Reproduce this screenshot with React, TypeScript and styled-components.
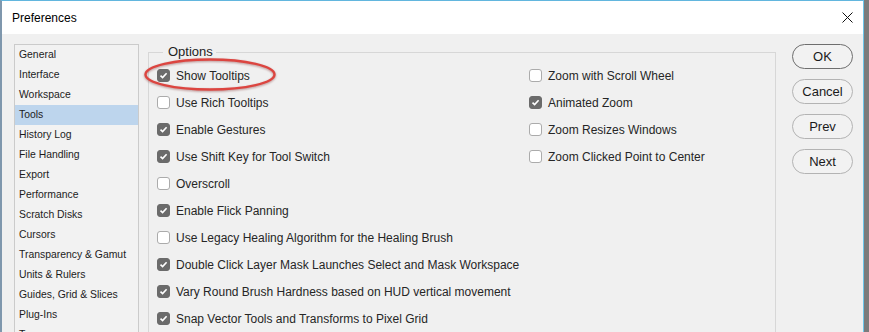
import * as React from "react";
import styled, { createGlobalStyle } from "styled-components";

const GlobalStyle = createGlobalStyle`
    html, body {
        margin: 0;
        padding: 0;
        height: 100%;
        overflow: hidden;
        background: #7b7b7b;
    }
    body {
        font-family: "Liberation Sans", Arial, sans-serif;
    }
`;

const Window = styled.div`
    width: 864px;
    height: 332px;
    box-sizing: border-box;
    border-left: 2px solid #7f97ad;
    border-top: 1px solid #62b6de;
    border-right: 1px solid #6cc6ea;
    background: #f0f0f0;
    display: flex;
    flex-direction: column;
    overflow: hidden;
`;

const TitleBar = styled.div`
    height: 33px;
    flex-shrink: 0;
    background: #ffffff;
    display: flex;
    align-items: center;
    justify-content: space-between;
    padding: 0 10px 0 10px;
    font-size: 12px;
    color: #000;
`;

const CloseIcon = styled.svg`
    width: 11px;
    height: 11px;
`;

const Body = styled.div`
    flex: 1;
    display: flex;
    align-items: flex-start;
    padding: 10px 0 0 12px;
    overflow: hidden;
`;

const Sidebar = styled.ul`
    list-style: none;
    margin: 0;
    padding: 0;
    width: 125px;
    height: 360px;
    box-sizing: border-box;
    flex-shrink: 0;
    border: 1px solid #cbcbcb;
    background: #f2f2f2;
`;

const SidebarItem = styled.li<{ $selected?: boolean }>`
    height: 20px;
    line-height: 20px;
    padding-left: 4px;
    font-size: 10.4px;
    color: #1c1c1c;
    white-space: nowrap;
    background: ${(p) => (p.$selected ? "#bdd5ed" : "transparent")};
`;

const Options = styled.fieldset`
    margin: 0 0 0 9px;
    padding: 2px 8px 0 8px;
    width: 628px;
    height: 340px;
    box-sizing: border-box;
    flex-shrink: 0;
    border: 1px solid #d7d7d7;
    display: flex;
    align-items: flex-start;
`;

const Legend = styled.legend`
    margin-left: 6px;
    padding: 0 3px 0 5px;
    font-size: 13px;
    line-height: 16px;
    color: #1e1e1e;
`;

const Column = styled.div<{ $width?: number }>`
    display: flex;
    flex-direction: column;
    width: ${(p) => (p.$width ? `${p.$width}px` : "auto")};
    flex-shrink: 0;
`;

const Row = styled.label`
    position: relative;
    display: flex;
    align-items: center;
    gap: 6px;
    height: 27px;
    font-size: 12px;
    color: #262626;
    white-space: nowrap;
`;

const Box = styled.span<{ $checked?: boolean }>`
    width: 13px;
    height: 13px;
    box-sizing: border-box;
    border-radius: 3px;
    flex-shrink: 0;
    display: flex;
    align-items: center;
    justify-content: center;
    background: ${(p) => (p.$checked ? "#6b6b6b" : "#ffffff")};
    border: 1px solid ${(p) => (p.$checked ? "#6b6b6b" : "#ababab")};
`;

const Highlight = styled.svg`
    position: absolute;
    left: -13px;
    top: -4px;
    width: 132px;
    height: 33px;
    overflow: visible;
    pointer-events: none;
    filter: drop-shadow(0.5px 1px 0.8px rgba(120, 30, 30, 0.45));
`;

const Buttons = styled.div`
    display: flex;
    flex-direction: column;
    gap: 10px;
    margin-left: 16px;
`;

const Button = styled.button<{ $primary?: boolean }>`
    width: 61px;
    height: 25px;
    border-radius: 13px;
    border: 1px solid ${(p) => (p.$primary ? "#6e6e6e" : "#b3b3b3")};
    background: #f2f2f2;
    font-family: "Liberation Sans", Arial, sans-serif;
    font-size: 13px;
    color: #1a1a1a;
    padding: 0;
`;

const sections = [
    "General",
    "Interface",
    "Workspace",
    "Tools",
    "History Log",
    "File Handling",
    "Export",
    "Performance",
    "Scratch Disks",
    "Cursors",
    "Transparency & Gamut",
    "Units & Rulers",
    "Guides, Grid & Slices",
    "Plug-Ins",
    "Type",
    "3D",
    "Technology Previews",
];

type Option = { label: string; checked: boolean; highlight?: boolean };

const leftOptions: Option[] = [
    { label: "Show Tooltips", checked: true, highlight: true },
    { label: "Use Rich Tooltips", checked: false },
    { label: "Enable Gestures", checked: true },
    { label: "Use Shift Key for Tool Switch", checked: true },
    { label: "Overscroll", checked: false },
    { label: "Enable Flick Panning", checked: true },
    { label: "Use Legacy Healing Algorithm for the Healing Brush", checked: false },
    { label: "Double Click Layer Mask Launches Select and Mask Workspace", checked: true },
    { label: "Vary Round Brush Hardness based on HUD vertical movement", checked: true },
    { label: "Snap Vector Tools and Transforms to Pixel Grid", checked: true },
];

const rightOptions: Option[] = [
    { label: "Zoom with Scroll Wheel", checked: false },
    { label: "Animated Zoom", checked: true },
    { label: "Zoom Resizes Windows", checked: false },
    { label: "Zoom Clicked Point to Center", checked: false },
];

const OptionRow = ({ label, checked, highlight }: Option) => (
    <Row>
        <Box $checked={checked}>
            {checked && (
                <svg width="9" height="9" viewBox="0 0 9 9">
                    <path d="M1.5 4.6 L3.6 6.6 L7.6 2.2" fill="none" stroke="#fff" strokeWidth="1.6" />
                </svg>
            )}
        </Box>
        {label}
        {highlight && (
            <Highlight viewBox="0 0 132 33">
                <ellipse cx="66" cy="16.5" rx="64.5" ry="15" fill="none" stroke="#dc4540" strokeWidth="2.4" />
            </Highlight>
        )}
    </Row>
);

const App = () => {
    return (
        <>
            <GlobalStyle />
            <Window>
                <TitleBar>
                    <span>Preferences</span>
                    <CloseIcon viewBox="0 0 11 11">
                        <path d="M0.5 0.5 L10.5 10.5 M10.5 0.5 L0.5 10.5" stroke="#111" strokeWidth="1" />
                    </CloseIcon>
                </TitleBar>
                <Body>
                    <Sidebar>
                        {sections.map((s) => (
                            <SidebarItem key={s} $selected={s === "Tools"}>
                                {s}
                            </SidebarItem>
                        ))}
                    </Sidebar>
                    <Options>
                        <Legend>Options</Legend>
                        <Column $width={372}>
                            {leftOptions.map((o) => (
                                <OptionRow key={o.label} {...o} />
                            ))}
                        </Column>
                        <Column>
                            {rightOptions.map((o) => (
                                <OptionRow key={o.label} {...o} />
                            ))}
                        </Column>
                    </Options>
                    <Buttons>
                        <Button $primary>OK</Button>
                        <Button>Cancel</Button>
                        <Button>Prev</Button>
                        <Button>Next</Button>
                    </Buttons>
                </Body>
            </Window>
        </>
    );
};

export default App;
